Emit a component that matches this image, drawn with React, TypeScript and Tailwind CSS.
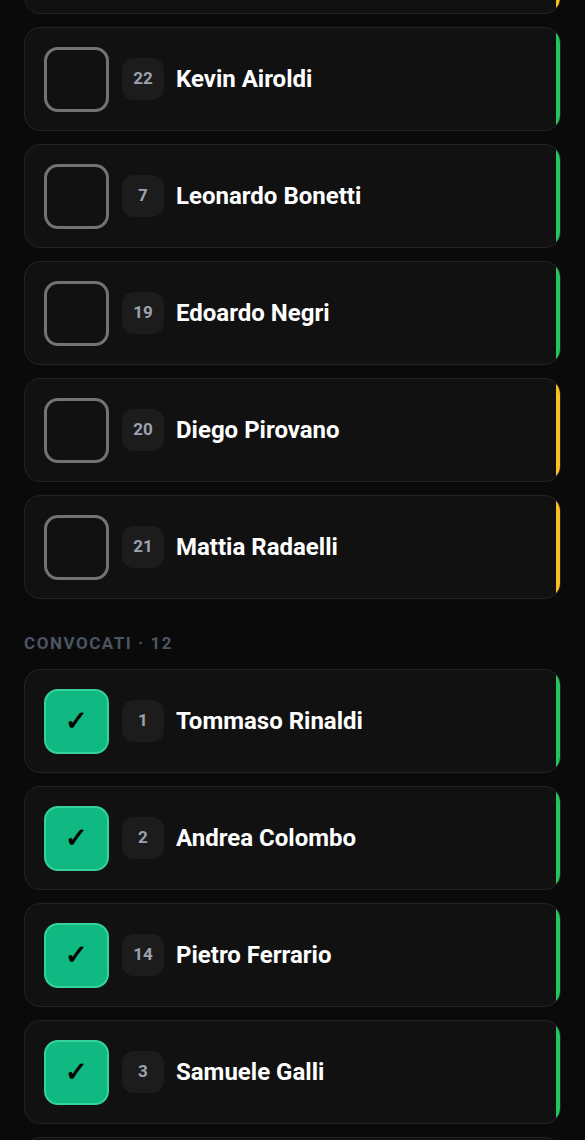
import React from "react";

type Player = {
  id: number;
  number: number;
  name: string;
  status: "ok" | "warn";
  called: boolean;
};

const players: Player[] = [
  { id: 0, number: 8, name: "Luca Brambilla", status: "warn", called: false },
  { id: 1, number: 22, name: "Kevin Airoldi", status: "ok", called: false },
  { id: 2, number: 7, name: "Leonardo Bonetti", status: "ok", called: false },
  { id: 3, number: 19, name: "Edoardo Negri", status: "ok", called: false },
  { id: 4, number: 20, name: "Diego Pirovano", status: "warn", called: false },
  { id: 5, number: 21, name: "Mattia Radaelli", status: "warn", called: false },
  { id: 6, number: 1, name: "Tommaso Rinaldi", status: "ok", called: true },
  { id: 7, number: 2, name: "Andrea Colombo", status: "ok", called: true },
  { id: 8, number: 14, name: "Pietro Ferrario", status: "ok", called: true },
  { id: 9, number: 3, name: "Samuele Galli", status: "ok", called: true },
  { id: 10, number: 5, name: "Marco Villa", status: "ok", called: true },
];

export default function App() {
  const available = players.filter((p) => !p.called);
  const called = players.filter((p) => p.called);

  return (
    <div
      className="min-h-screen bg-[#0a0a0a] px-6 overflow-hidden"
      style={{ fontFamily: "Roboto, 'Liberation Sans', sans-serif" }}
    >
      <div className="-mt-[90px] flex flex-col gap-[13px]">
        {available.map((player) => (
          <PlayerRow key={player.id} player={player} />
        ))}
      </div>

      <h2 className="mt-[34px] mb-4 text-[17px] leading-5 font-bold tracking-[0.09em] text-[#4b5563] uppercase">
        Convocati · 12
      </h2>

      <div className="flex flex-col gap-[13px] pb-10">
        {called.map((player) => (
          <PlayerRow key={player.id} player={player} />
        ))}
      </div>
    </div>
  );
}

function PlayerRow({ player }: { player: Player }) {
  return (
    <div className="relative overflow-hidden h-[104px] bg-[#111111] border border-[#232323] rounded-2xl px-[19px] flex items-center">
      {player.called ? (
        <div className="w-[65px] h-[65px] shrink-0 rounded-[14px] bg-[#10b981] border-2 border-[#34d399] flex items-center justify-center text-[27px] font-bold text-black">
          ✓
        </div>
      ) : (
        <div className="w-[65px] h-[65px] shrink-0 rounded-[14px] border-[3px] border-[#737373]" />
      )}

      <div className="ml-[13px] w-[42px] h-[42px] shrink-0 rounded-xl bg-[#1c1c1c] flex items-center justify-center text-[17px] font-bold text-[#9ca3af]">
        {player.number}
      </div>

      <p className="ml-3 text-[24px] font-bold text-white">{player.name}</p>

      <div
        className={`absolute right-0 top-0 bottom-0 w-1 ${
          player.status === "ok" ? "bg-[#22c55e]" : "bg-[#fbbf24]"
        }`}
      />
    </div>
  );
}
